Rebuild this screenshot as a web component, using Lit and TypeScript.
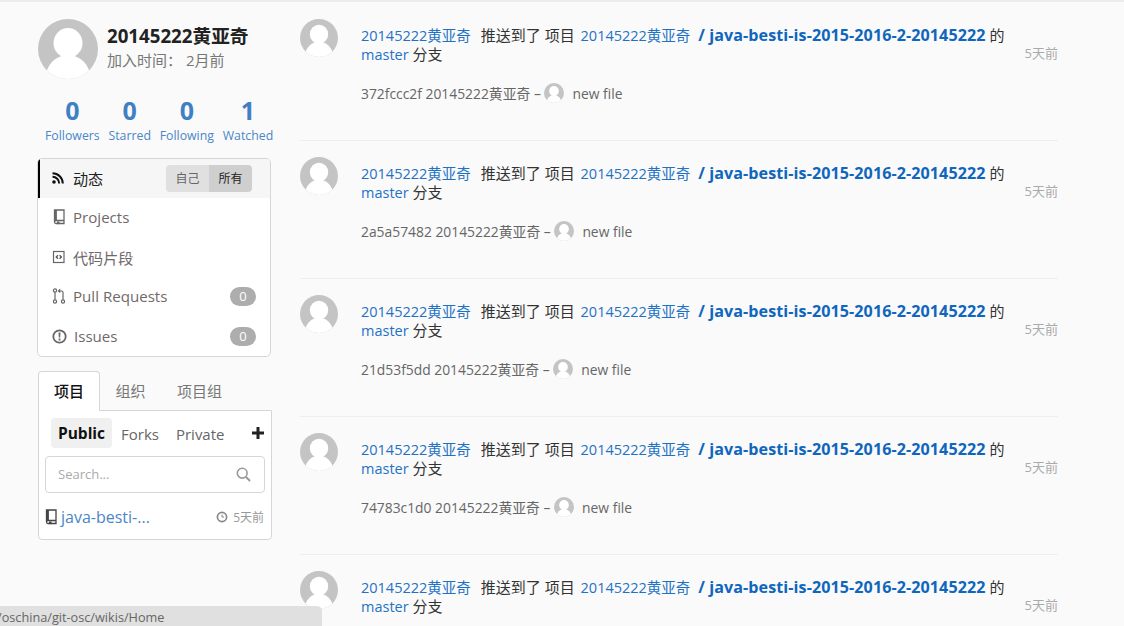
import { LitElement, html, css, svg } from "lit";
import { customElement } from "lit/decorators.js";

const avatar = (size: number) => html`<svg class="avatar" width=${size} height=${size} viewBox="0 0 60 60">
  <defs><clipPath id="c"><circle cx="30" cy="30" r="30"/></clipPath></defs>
  <g clip-path="url(#c)"><rect width="60" height="60" fill="#c4c4c4"/>
  <ellipse cx="30" cy="24" rx="14.5" ry="15" fill="#fff"/>
  <ellipse cx="30" cy="58" rx="22" ry="22" fill="#fff"/></g></svg>`;

const bookIcon = svg`<path d="M2.5 1h9.5v10.5H4a1.6 1.6 0 0 0-1.5 1.5z M2.5 13a1.6 1.6 0 0 0 1.5 1.5h8v-3" fill="none" stroke="currentColor" stroke-width="1.3"/><rect x="2.5" y="1" width="2.4" height="10.5" fill="currentColor"/><path d="M5 12.5h2.5v3l-1.2-.8-1.3.8z" fill="currentColor"/>`;

const rows = ["372fccc2f", "2a5a57482", "21d53f5dd", "74783c1d0", ""];

@customElement("app-root")
export class AppRoot extends LitElement {
  static styles = css`
    :host { display: block; height: 626px; overflow: hidden; position: relative; background: #fafafa; border-top: 2px solid #ececec; box-sizing: border-box;
      font-family: "Open Sans", "Noto Sans CJK SC", sans-serif; font-size: 14px; color: #666; }
    a { color: inherit; text-decoration: none; }
    .page { display: flex; align-items: flex-start; padding: 17px 0 0 38px; }
    .side { width: 234px; flex: none; display: flex; flex-direction: column; }
    .avatar { display: block; flex: none; }
    .profile { display: flex; gap: 9px; height: 58px; }
    .pinfo { padding-top: 3px; }
    .name { font-size: 18.7px; line-height: 27px; font-weight: 700; color: #222; white-space: nowrap; }
    .joined { font-size: 15px; line-height: 24px; margin-top: -1px; color: #777; white-space: pre; }
    .stats { display: flex; gap: 8.8px; margin: 16px 0 0 7px; color: #4a86c8; }
    .stat { display: flex; flex-direction: column; align-items: center; }
    .stat b { font-size: 25px; line-height: 34px; color: #3f80c4; }
    .stat span { font-size: 12.3px; line-height: 18px; white-space: nowrap; }
    .menu { width: 234px; box-sizing: border-box; height: 199px; margin: 13px 0 0 -1px; background: #fff; border: 1px solid #d6d6d6; border-radius: 5px; overflow: hidden; display: flex; flex-direction: column; }
    .item { flex: none; height: 39.6px; box-sizing: border-box; padding: 0 14px 1px 14px; display: flex; align-items: center; gap: 7px; font-size: 15.1px; color: #70696a; }
    .item svg { flex: none; }
    .item.on { height: 39px; background: #f6f6f6; border-left: 2px solid #000; color: #222; padding-left: 12px; gap: 9px; }
    .label { flex: 1; white-space: nowrap; }
    .seg { display: flex; height: 27px; border-radius: 4px; overflow: hidden; font-size: 12px; line-height: 27px; margin-right: 4px; }
    .seg span { width: 43px; text-align: center; background: #e0e0e0; color: #666; }
    .seg span.cur { background: #cfcfcf; color: #222; }
    .badge { width: 26px; height: 19px; border-radius: 10px; background: #adadad; color: #fff; font-size: 13px; line-height: 19px; text-align: center; }
    .tabs { display: flex; margin-top: 14px; height: 40px; position: relative; z-index: 1; font-size: 15px; }
    .tab { height: 40px; line-height: 40px; width: 61px; box-sizing: border-box; text-align: center; color: #777; }
    .tab.cur { width: 62px; background: #fff; border: 1px solid #d6d6d6; border-bottom: 0; border-radius: 4px 4px 0 0; color: #111; font-weight: 500; line-height: 39px; }
    .tab.three { width: 77px; }
    .panel { width: 234px; box-sizing: border-box; height: 130px; margin-top: -1px; background: #fff; border: 1px solid #d6d6d6; border-radius: 0 0 4px 4px; padding: 7px 6px 0; display: flex; flex-direction: column; }
    .filters { display: flex; align-items: center; height: 30px; font-size: 15px; color: #666; padding-left: 6px; }
    .filters .pub { width: 61px; height: 30px; line-height: 30px; text-align: center; background: #f0f0f0; border-radius: 4px; color: #111; font-weight: 700; font-size: 15.5px; }
    .filters .fk { margin-left: 9px; padding-top: 2px; }
    .filters .pv { margin-left: 17px; flex: 1; padding-top: 2px; }
    .plus { margin-right: 1px; }
    .search { height: 37px; box-sizing: border-box; margin-top: 8px; border: 1px solid #d6d6d6; border-radius: 4px; display: flex; align-items: center; justify-content: space-between; padding: 0 13px 0 12px; font-size: 13px; color: #aaa; }
    .search span { padding-bottom: 2px; }
    .repo { display: flex; align-items: center; margin-top: 13px; height: 22px; }
    .repo a { color: #4a86c8; font-size: 16px; margin-left: 3px; flex: 1; white-space: nowrap; }
    .repo .bk { color: #444; margin-left: -1px; }
    .repo .when { display: flex; align-items: center; gap: 5px; font-size: 12px; color: #999; margin-right: 1px; }
    .feed { width: 758px; flex: none; margin-left: 28px; }
    .row { height: 122px; margin-bottom: 16px; box-sizing: border-box; border-bottom: 1px solid #eee; display: flex; gap: 23px; }
    .main { flex: 1; position: relative; padding-top: 7px; }
    .title { font-size: 15px; line-height: 19px; color: #333; width: 650px; }
    .title a { color: #1f72c4; font-size: 14.5px; }
    .title a.rp { color: #0f66bd; font-weight: 700; font-size: 16.1px; letter-spacing: .08px; margin-left: 4px; }
    .verb { margin-left: 6px; }
    .org { margin-left: 2px; }
    .when5 { position: absolute; right: 0; top: 25px; font-size: 13px; line-height: 18px; color: #aaa; }
    .commit { display: flex; align-items: center; margin-top: 18px; height: 22px; font-size: 13.85px; color: #666; white-space: pre; }
    .commit .avatar { margin: 0 8px 0 0; }
    .status { position: absolute; left: 0; bottom: 0; width: 322px; height: 20px; background: #e0e0e0; border-radius: 0 5px 0 0; font-size: 12.7px; line-height: 23px; color: #666; white-space: nowrap; overflow: hidden; }
    .status span { margin-left: -3px; display: inline-block; }
  `;

  render() {
    return html`
      <div class="page">
        <div class="side">
          <div class="profile">
            ${avatar(60)}
            <div class="pinfo">
              <div class="name">20145222黄亚奇</div>
              <div class="joined">加入时间： 2月前</div>
            </div>
          </div>
          <div class="stats">
            ${[["0", "Followers"], ["0", "Starred"], ["0", "Following"], ["1", "Watched"]].map(([n, l]) => html`<div class="stat"><b>${n}</b><span>${l}</span></div>`)}
          </div>
          <div class="menu">
            <div class="item on">
              <svg width="12" height="12" viewBox="0 0 12 12"><circle cx="2" cy="10" r="1.8" fill="#111"/><path d="M.5 4.8a6.7 6.7 0 0 1 6.7 6.7M.5 1.2A10.3 10.3 0 0 1 10.8 11.5" fill="none" stroke="#111" stroke-width="2"/></svg>
              <span class="label">动态</span>
              <div class="seg"><span>自己</span><span class="cur">所有</span></div>
            </div>
            <div class="item"><svg width="14" height="16" viewBox="0 0 14 16" style="color:#666">${bookIcon}</svg><span class="label">Projects</span></div>
            <div class="item"><svg width="14" height="14" viewBox="0 0 14 14"><rect x="1.5" y="1.5" width="10.5" height="11" fill="none" stroke="#666" stroke-width="1.2"/><path d="M6 5.2 4.2 7 6 8.8M7.6 5.2 9.4 7 7.6 8.8" fill="none" stroke="#555" stroke-width="1.3"/></svg><span class="label">代码片段</span></div>
            <div class="item"><svg width="14" height="16" viewBox="0 0 14 16"><g fill="none" stroke="#666" stroke-width="1.2"><circle cx="3" cy="13.5" r="1.6"/><circle cx="3" cy="2.5" r="1.6"/><circle cx="11" cy="13.5" r="1.6"/><path d="M3 4.2v7.6M11 11.8V4.5q0-1.5-1.5-1.5H7"/></g><path d="M8.2 .6v4.6L5.6 3z" fill="#666"/></svg><span class="label">Pull Requests</span><span class="badge">0</span></div>
            <div class="item"><svg width="15" height="15" viewBox="0 0 15 15"><circle cx="7.5" cy="7.5" r="6.2" fill="none" stroke="#666" stroke-width="1.8"/><path d="M6.5 3.5h2l-.3 5h-1.4zM6.6 9.6h1.8v1.8H6.6z" fill="#666"/></svg><span class="label">Issues</span><span class="badge">0</span></div>
          </div>
          <div class="tabs">
            <div class="tab cur">项目</div><div class="tab">组织</div><div class="tab three">项目组</div>
          </div>
          <div class="panel">
            <div class="filters">
              <span class="pub">Public</span><span class="fk">Forks</span><span class="pv">Private</span>
              <svg class="plus" width="12" height="12" viewBox="0 0 12 12"><path d="M4.5 0h3v4.5H12v3H7.5V12h-3V7.5H0v-3h4.5z" fill="#222"/></svg>
            </div>
            <div class="search"><span>Search...</span>
              <svg width="15" height="15" viewBox="0 0 15 15"><circle cx="6.2" cy="6.2" r="4.9" fill="none" stroke="#999" stroke-width="1.6"/><path d="m9.8 9.8 4.2 4.2" stroke="#999" stroke-width="2"/></svg>
            </div>
            <div class="repo">
              <svg class="bk" width="14" height="16" viewBox="0 0 14 16">${bookIcon}</svg>
              <a href="#">java-besti-...</a>
              <span class="when"><svg width="12" height="12" viewBox="0 0 12 12"><circle cx="6" cy="6" r="4.6" fill="none" stroke="#888" stroke-width="1.7"/><path d="M6 3.5V6H8" fill="none" stroke="#888"/></svg>5天前</span>
            </div>
          </div>
        </div>
        <div class="feed">
          ${rows.map((h) => html`
            <div class="row">
              ${avatar(38)}
              <div class="main">
                <div class="title"><a href="#">20145222黄亚奇</a> <span class="verb">推送到了</span> 项目 <a class="org" href="#">20145222黄亚奇</a> <a class="rp" href="#">/ java-besti-is-2015-2016-2-20145222</a> 的 <a href="#">master</a> 分支</div>
                <span class="when5">5天前</span>
                ${h ? html`<div class="commit">${h} 20145222黄亚奇 – ${avatar(20)}new file</div>` : ""}
              </div>
            </div>`)}
        </div>
      </div>
      <div class="status"><span>/oschina/git-osc/wikis/Home</span></div>
    `;
  }
}
